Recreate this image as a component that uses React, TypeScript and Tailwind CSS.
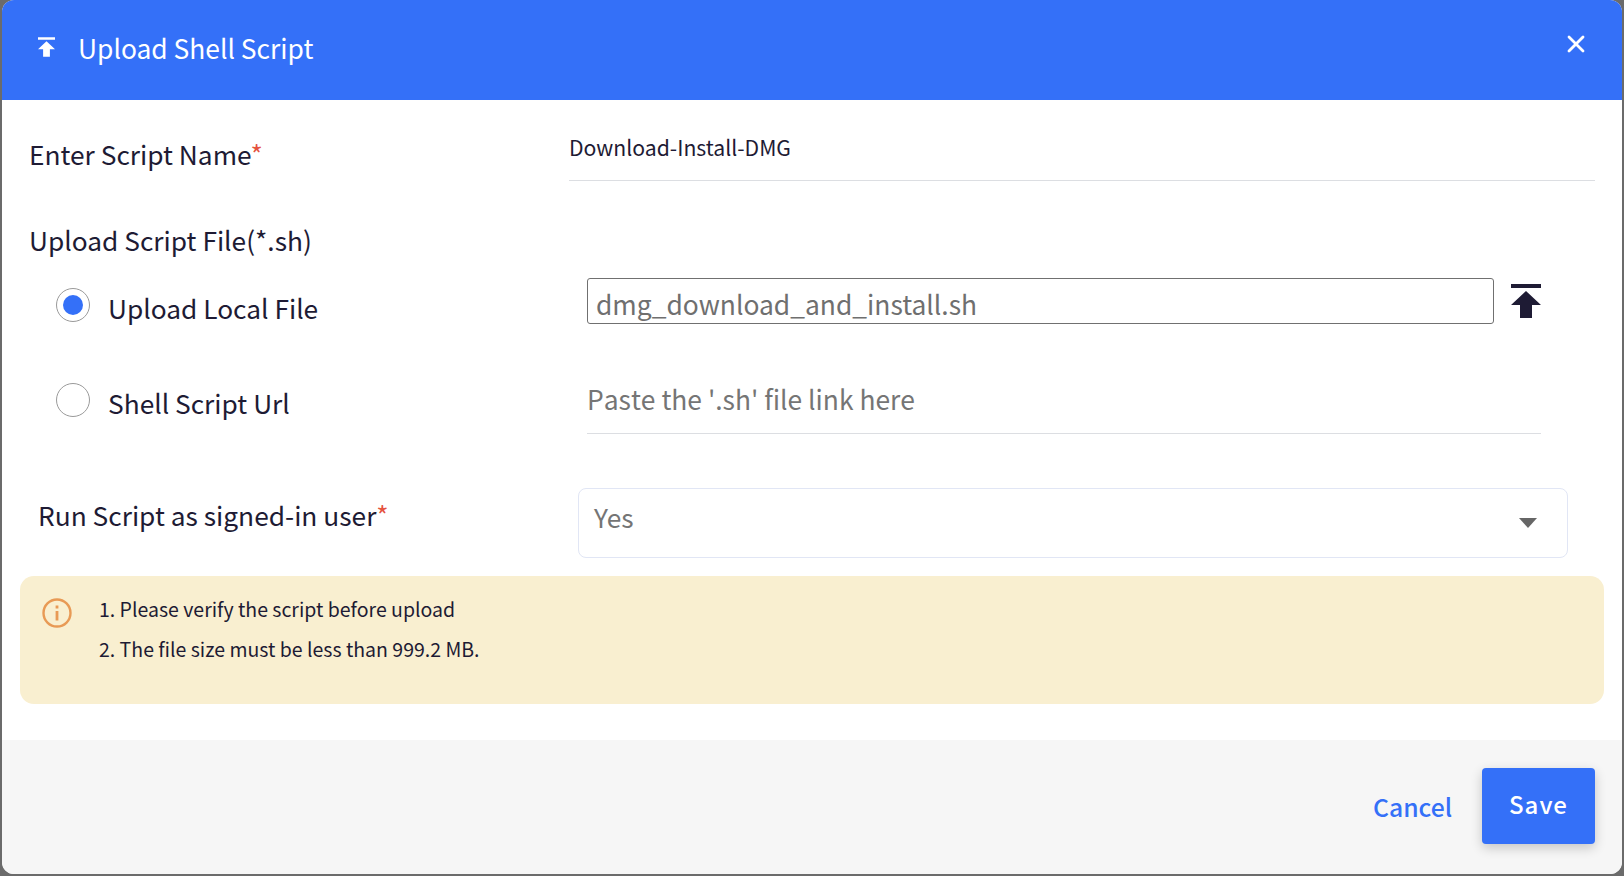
import { X } from "lucide-react";

function UploadIcon({ className }: { className: string }) {
  return (
    <svg viewBox="0 0 30 34" fill="currentColor" className={className}>
      <path d="M0 0h30v4H0z" />
      <path d="M15 7 30 21H21V34H9V21H0z" />
    </svg>
  );
}

function InfoIcon() {
  return (
    <svg viewBox="0 0 30 30" fill="none" className="w-[30px] h-[30px] text-[#e89a55]">
      <circle cx="15" cy="15" r="13.5" stroke="currentColor" strokeWidth="2.4" />
      <rect x="13.6" y="7.5" width="2.8" height="3" fill="currentColor" />
      <rect x="13.6" y="13" width="2.8" height="9.5" fill="currentColor" />
    </svg>
  );
}

export default function App() {
  return (
    <div className="w-[1624px] h-[876px] bg-[#6b6b6b] px-[2px] pb-[2px] overflow-hidden font-['Noto_Sans_CJK_SC','Noto_Sans',sans-serif] text-[#1e1b34]">
      <div className="h-[874px] bg-white rounded-[12px] overflow-hidden flex flex-col">
        {/* Header */}
        <header className="h-[100px] shrink-0 bg-[#3470f8] text-white flex items-start justify-between pl-[36px] pr-[38px]">
          <div className="flex items-center mt-[28px] gap-[23px]">
            <UploadIcon className="w-[17px] h-[20px] -mt-[2px]" />
            <h1 className="text-[26.4px] leading-[40px]">Upload Shell Script</h1>
          </div>
          <X className="w-[28px] h-[28px] -mr-[6px] mt-[30px]" strokeWidth={2.4} />
        </header>

        <main className="flex-1 px-[27px]">
          {/* Script name */}
          <div className="flex h-[81px]">
            <label className="w-[540px] pt-[34px] text-[26.3px] leading-[40px] shrink-0">
              Enter Script Name<span className="text-[#e5533f]">*</span>
            </label>
            <div className="flex-1 border-b border-[#dcdee2] pt-[30px] text-[21.2px] leading-[34px]">
              Download-Install-DMG
            </div>
          </div>

          <div className="mt-[39px] text-[26.3px] leading-[40px]">Upload Script File(*.sh)</div>

          {/* Upload local */}
          <div className="flex mt-[18px] h-[66px]">
            <div className="w-[558px] shrink-0 flex pl-[27px]">
              <span className="w-[34px] h-[34px] mt-[10px] rounded-full border border-[#9a9a9a] flex items-center justify-center">
                <span className="w-[20px] h-[20px] rounded-full bg-[#3470f8]" />
              </span>
              <span className="ml-[18px] mt-[10px] text-[26.3px] leading-[40px]">Upload Local File</span>
            </div>
            <div className="w-[907px] h-[46px] border border-[#707070] rounded-[3px] px-[8px] text-[26.4px] leading-[50px] text-[#6f6f6f] shrink-0">
              dmg_download_and_install.sh
            </div>
            <UploadIcon className="ml-[17px] mt-[6px] w-[30px] h-[34px] text-[#1e1b34]" />
          </div>

          {/* Url */}
          <div className="flex mt-[30px] h-[60px]">
            <div className="w-[558px] shrink-0 flex pl-[27px]">
              <span className="w-[34px] h-[34px] mt-[9px] rounded-full border border-[#9a9a9a]" />
              <span className="ml-[18px] mt-[9px] text-[26.3px] leading-[40px]">Shell Script Url</span>
            </div>
            <div className="w-[954px] border-b border-[#dcdee2] pt-[5px] text-[26.4px] [font-kerning:none] leading-[40px] text-[#757575]">
              Paste the '.sh' file link here
            </div>
          </div>

          {/* Run as */}
          <div className="flex mt-[54px]">
            <label className="w-[549px] pl-[9px] pt-[7px] text-[26.3px] leading-[40px] shrink-0">
              Run Script as signed-in user<span className="text-[#e5533f]">*</span>
            </label>
            <div className="w-[990px] h-[70px] border border-[#e1e6f5] rounded-[8px] flex items-center justify-between pl-[15px] pr-[30px] text-[26.3px] text-[#757575]">
              <span className="leading-[40px] -mt-[13px]">Yes</span>
              <span className="w-0 h-0 border-x-[9px] border-x-transparent border-t-[10px] border-t-[#666666]" />
            </div>
          </div>

          {/* Notice */}
          <div className="-mx-[9px] mt-[18px] h-[128px] bg-[#f9efd0] rounded-[14px] flex pl-[22px] pt-[22px]">
            <InfoIcon />
            <ol className="ml-[27px] -mt-[9px] text-[19.5px] leading-[40px]">
              <li>1. Please verify the script before upload</li>
              <li>2. The file size must be less than 999.2 MB.</li>
            </ol>
          </div>
        </main>

        {/* Footer */}
        <footer className="h-[134px] shrink-0 bg-[#f6f6f6] flex items-start justify-end pr-[27px] pt-[28px] gap-[30px]">
          <button className="text-[#3470f8] text-[24.7px] leading-[40px] font-medium mt-[18px]">Cancel</button>
          <button className="w-[113px] h-[76px] pb-[4px] bg-[#3470f8] text-white rounded-[4px] text-[24px] font-medium tracking-[1px] shadow-[0_4px_12px_rgba(0,0,0,0.2)]">
            Save
          </button>
        </footer>
      </div>
    </div>
  );
}
